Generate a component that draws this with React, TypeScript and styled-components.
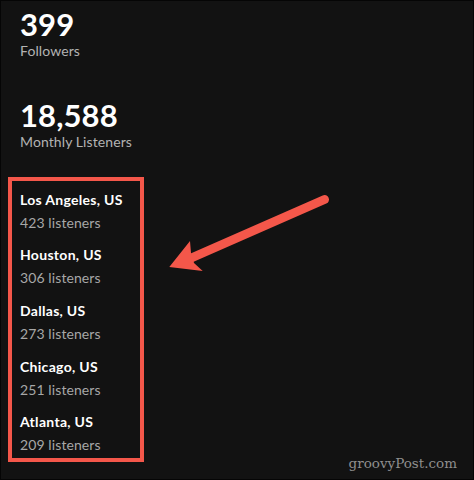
import React from "react";
import styled, { createGlobalStyle } from "styled-components";

const Global = createGlobalStyle`
  html, body { margin: 0; padding: 0; background: #121212; }
  #root { width: 474px; height: 480px; }
`;

const Page = styled.div`
  position: relative;
  box-sizing: border-box;
  width: 474px;
  height: 480px;
  background: #121212;
  border: 1px solid #050505;
  padding: 6px 0 0 7px;
  font-family: Lato, "Noto Sans", sans-serif;
  overflow: hidden;
`;

const Stat = styled.div<{ $gap: number }>`
  display: flex;
  flex-direction: column;
  padding-left: 12px;
  margin-top: ${(p) => p.$gap}px;
`;

const Big = styled.div`
  color: #ffffff;
  font-weight: 700;
  font-size: 31px;
  line-height: 34px;
  letter-spacing: 0.1px;
`;

const Label = styled.div`
  color: #b3b3b3;
  font-size: 14px;
  line-height: 20px;
  letter-spacing: 0.1px;
`;

const CityBox = styled.div`
  box-sizing: border-box;
  width: 136px;
  margin-top: 25px;
  border: 4px solid #f4574a;
  padding: 8.5px 0 3px 8px;
  display: flex;
  flex-direction: column;
  gap: 12.7px;
`;

const City = styled.div`
  display: flex;
  flex-direction: column;
  gap: 3px;
`;

const CityName = styled.div`
  color: #ffffff;
  font-weight: 700;
  font-size: 14px;
  line-height: 20px;
  letter-spacing: 0.3px;
`;

const Listeners = styled.div`
  color: #a7a7a7;
  font-size: 14px;
  line-height: 20px;
  letter-spacing: 0.1px;
`;

const ArrowLayer = styled.svg`
  position: absolute;
  left: 0;
  top: 0;
  pointer-events: none;
`;

const Watermark = styled.div`
  position: absolute;
  right: 16px;
  bottom: 7px;
  color: #8e8e8e;
  font-family: "DejaVu Serif", "Liberation Serif", serif;
  font-size: 13.5px;
  line-height: 18px;
`;

const cities = [
  { name: "Los Angeles, US", count: 423 },
  { name: "Houston, US", count: 306 },
  { name: "Dallas, US", count: 273 },
  { name: "Chicago, US", count: 251 },
  { name: "Atlanta, US", count: 209 },
];

export default function App() {
  return (
    <>
      <Global />
      <Page>
        <Stat $gap={0}>
          <Big>399</Big>
          <Label>Followers</Label>
        </Stat>
        <Stat $gap={37}>
          <Big>18,588</Big>
          <Label>Monthly Listeners</Label>
        </Stat>
        <CityBox>
          {cities.map((c) => (
            <City key={c.name}>
              <CityName>{c.name}</CityName>
              <Listeners>{c.count} listeners</Listeners>
            </City>
          ))}
        </CityBox>
        <ArrowLayer width="474" height="480" viewBox="0 0 474 480">
          <line
            x1="188"
            y1="258"
            x2="323.5"
            y2="198.5"
            stroke="#f4574a"
            strokeWidth="9"
            strokeLinecap="round"
          />
          <polygon
            points="168.3,266 189,240 190,252 193,262 201.7,270"
            fill="#f4574a"
          />
        </ArrowLayer>
        <Watermark>groovyPost.com</Watermark>
      </Page>
    </>
  );
}
